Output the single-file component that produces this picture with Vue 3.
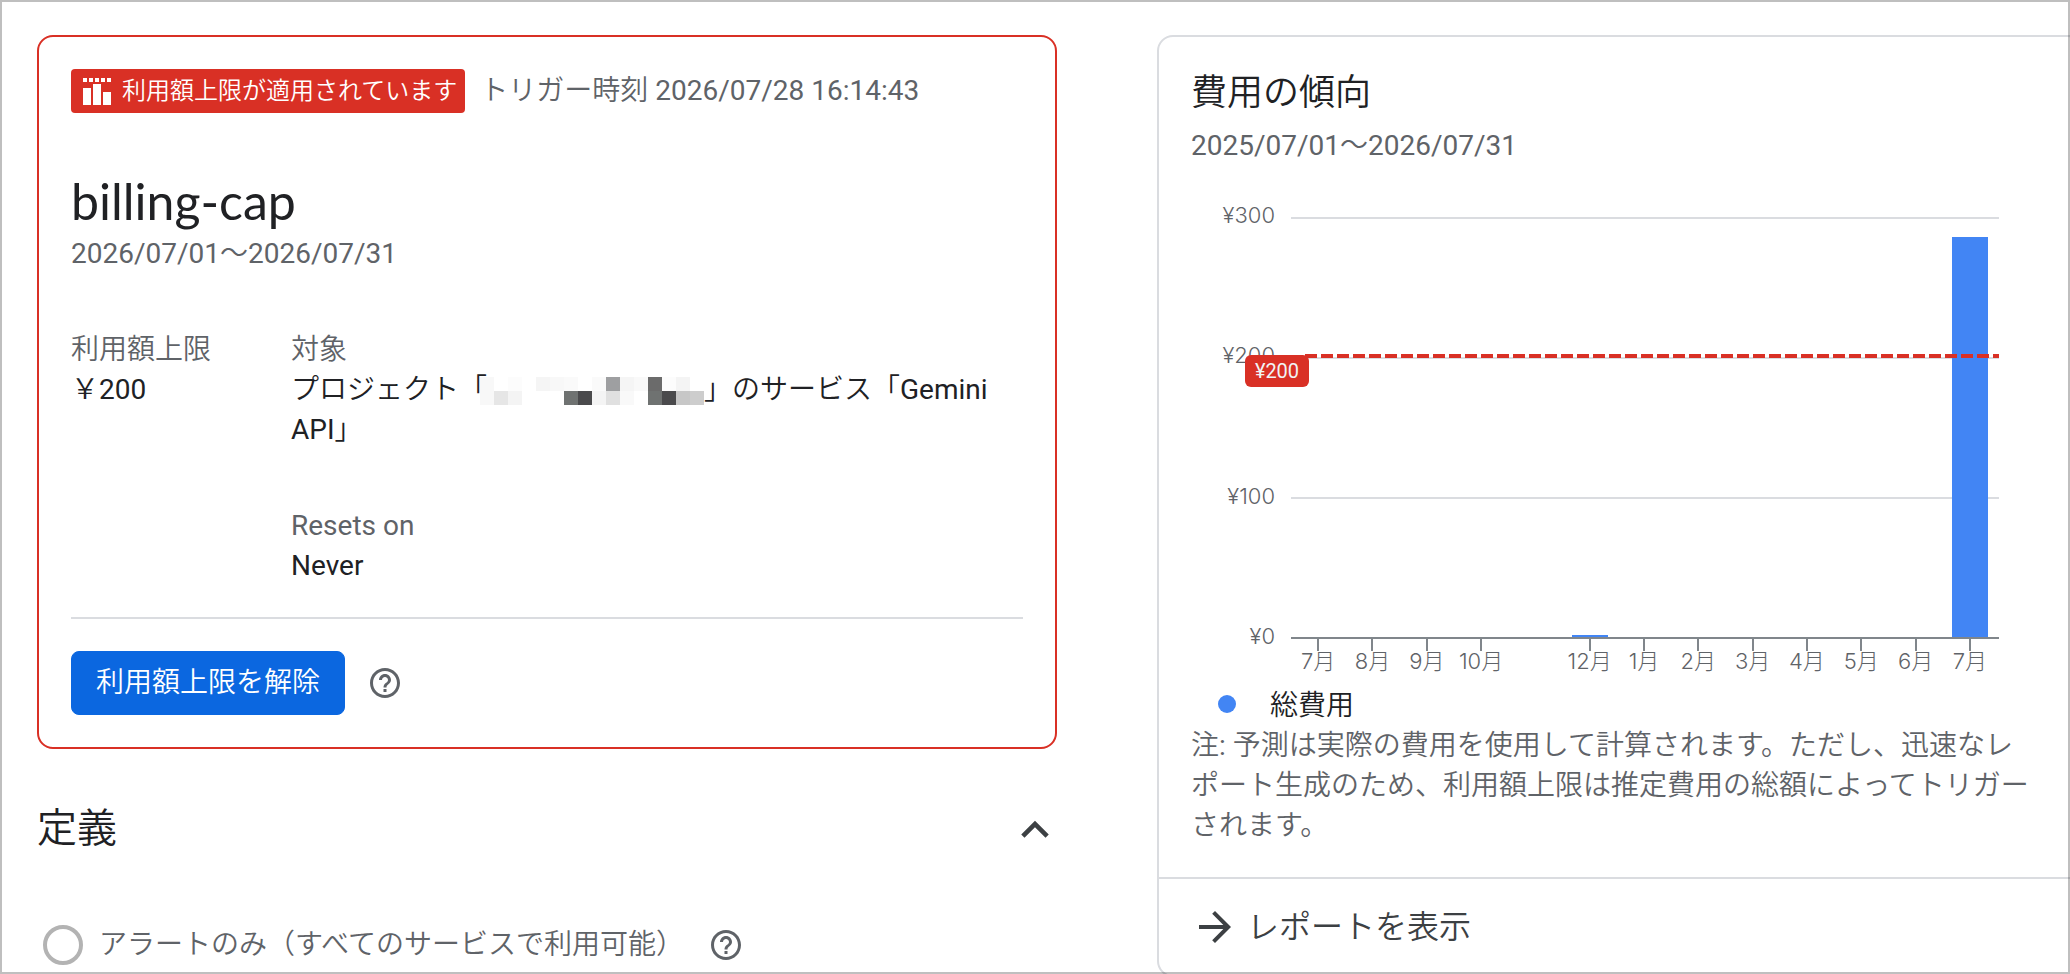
<template>
  <div class="page">
    <main class="page__main">
      <section class="cap-card">
        <div class="cap-card__status">
          <span class="chip">
            <svg class="chip__icon" viewBox="0 0 28 28" aria-hidden="true">
              <path d="M0 1h4v4H0zM6 1h4v4H6zM12 1h4v4h-4zM18 1h4v4h-4zM24 1h4v4h-4z" />
              <path d="M0 11h8v17H0zM10 7h8v21h-8zM20 15h8v13h-8z" />
            </svg>
            利用額上限が適用されています
          </span>
          <span class="muted">トリガー時刻 2026/07/28 16:14:43</span>
        </div>

        <h1 class="cap-card__title">billing-cap</h1>
        <p class="muted">2026/07/01～2026/07/31</p>

        <div class="cap-card__details">
          <dl class="detail">
            <dt>利用額上限</dt>
            <dd>￥200</dd>
          </dl>
          <div class="cap-card__column">
            <dl class="detail">
              <dt>対象</dt>
              <dd>
                プロジェクト「<svg class="mosaic" viewBox="0 0 16 2" preserveAspectRatio="none" aria-hidden="true">
                  <rect
                    v-for="(fill, i) in mosaic"
                    :key="i"
                    :x="i % 16"
                    :y="Math.floor(i / 16)"
                    width="1"
                    height="1"
                    :fill="fill"
                  />
                </svg>」のサービス「Gemini API」
              </dd>
            </dl>
            <dl class="detail">
              <dt>Resets on</dt>
              <dd>Never</dd>
            </dl>
          </div>
        </div>

        <div class="cap-card__actions">
          <button type="button" class="btn-primary">利用額上限を解除</button>
          <button type="button" class="btn-icon" aria-label="ヘルプ">
            <svg class="help" viewBox="0 0 24 24"><path :d="helpPath" /></svg>
          </button>
        </div>
      </section>

      <section class="definition">
        <div class="definition__header">
          <h2 id="definition-title">定義</h2>
          <button type="button" class="btn-icon" aria-labelledby="definition-title" aria-expanded="true">
            <svg class="chevron" viewBox="2.4 2 19.2 19.2">
              <path d="M12 8l-6 6 1.41 1.41L12 10.83l4.59 4.58L18 14z" />
            </svg>
          </button>
        </div>
        <div class="option">
          <input id="alert-only" class="option__radio" type="radio" name="mode" value="alert" />
          <label for="alert-only">アラートのみ（すべてのサービスで利用可能）</label>
          <button type="button" class="btn-icon option__help" aria-label="ヘルプ">
            <svg class="help" viewBox="0 0 24 24"><path :d="helpPath" /></svg>
          </button>
        </div>
      </section>
    </main>

    <aside class="trend">
      <div class="trend__body">
        <h2 class="trend__title">費用の傾向</h2>
        <p class="muted">2025/07/01～2026/07/31</p>

        <div class="chart">
          <div class="chart__y">
            <span v-for="v in yTicks" :key="v">¥{{ v }}</span>
          </div>
          <div class="chart__plot">
            <div class="chart__grid">
              <i v-for="v in yTicks" :key="v" />
            </div>
            <div class="chart__bars">
              <div v-for="(m, i) in months" :key="i" class="chart__slot">
                <div v-if="m.cost" class="chart__bar" :style="{ height: barHeight(m.cost) }" />
              </div>
            </div>
            <div class="chart__limit" :style="{ bottom: barHeight(limit) }" />
            <div class="chart__badge" :style="{ top: `calc(100% - ${barHeight(limit)})` }">¥{{ limit }}</div>
          </div>
          <div class="chart__x">
            <span v-for="(m, i) in months" :key="i" :class="{ tick: m.label }">{{ m.label }}</span>
          </div>
        </div>

        <div class="legend"><i class="legend__dot" />総費用</div>
        <p class="muted">
          注: 予測は実際の費用を使用して計算されます。ただし、迅速なレポート生成のため、利用額上限は推定費用の総額によってトリガーされます。
        </p>
      </div>

      <a class="trend__link" href="#report">
        <svg class="arrow" viewBox="0 0 24 24" aria-hidden="true">
          <path d="M12 4l-1.41 1.41L16.17 11H4v2h12.17l-5.58 5.59L12 20l8-8z" />
        </svg>
        レポートを表示
      </a>
    </aside>
  </div>
</template>

<script setup>
const limit = 200
const yMax = 300
const yTicks = [300, 200, 100, 0]

// 11月はラベルなし
const months = [
  { label: '7月', cost: 0 },
  { label: '8月', cost: 0 },
  { label: '9月', cost: 0 },
  { label: '10月', cost: 0 },
  { label: '', cost: 0 },
  { label: '12月', cost: 1.5 },
  { label: '1月', cost: 0 },
  { label: '2月', cost: 0 },
  { label: '3月', cost: 0 },
  { label: '4月', cost: 0 },
  { label: '5月', cost: 0 },
  { label: '6月', cost: 0 },
  { label: '7月', cost: 286 }
]

const barHeight = cost => `${(cost / yMax) * 100}%`

// プロジェクト名のモザイク（16列 x 2行）
const mosaic = [
  '#f8f8f8', '#fff', '#fcfcfc', '#fff', '#f5f5f5', '#f8f8f8', '#fafafa', '#fff',
  '#fafafa', '#9e9fa1', '#f5f5f5', '#f9f9f9', '#6b6b6b', '#fcfcfc', '#f4f4f4', '#fff',
  '#f8f8f8', '#e6e6e6', '#f4f4f4', '#fff', '#fff', '#fff', '#6f7271', '#4a4a4c',
  '#f4f4f4', '#e0e0e0', '#f9f9f9', '#fff', '#6f7271', '#4a4a4c', '#c7c7c7', '#cdcdcd'
]

const helpPath =
  'M11 18h2v-2h-2v2zm1-16C6.48 2 2 6.48 2 12s4.48 10 10 10 10-4.48 10-10S17.52 2 12 2zm0 18c-4.41 0-8-3.59-8-8s3.59-8 8-8 8 3.59 8 8-3.59 8-8 8zm0-14c-2.21 0-4 1.79-4 4h2c0-1.1.9-2 2-2s2 .9 2 2c0 2-3 1.75-3 5h2c0-2.25 3-2.5 3-5 0-2.21-1.79-4-4-4z'
</script>

<style>
body {
  margin: 0;
  background: #fff;
}
</style>

<style scoped>
.page {
  box-sizing: border-box;
  position: relative;
  display: grid;
  grid-template-columns: minmax(0, 1020fr) minmax(0, 913fr);
  align-items: start;
  gap: 100px;
  height: 100vh;
  padding: 35px 0 0 37px;
  overflow: hidden;
  color: #202124;
  font: 28px/40px Roboto, "Noto Sans CJK JP DemiLight", "Noto Sans CJK JP Light", "Noto Sans CJK JP", sans-serif;
}
.page::after {
  content: "";
  position: absolute;
  inset: 0;
  border: 2px solid rgba(0, 0, 0, .25);
  pointer-events: none;
}

h1, h2, p, dl, dd {
  margin: 0;
  font-weight: 400;
}
button {
  font: inherit;
  cursor: pointer;
}
svg {
  display: block;
  flex: none;
  fill: currentColor;
}

.muted {
  color: #5f6368;
}

/* 利用額上限カード */
.cap-card {
  padding: 32px;
  border: 2px solid #d93025;
  border-radius: 16px;
}
.cap-card__status {
  display: flex;
  align-items: center;
  gap: 15px;
}
.chip {
  display: flex;
  align-items: center;
  gap: 11px;
  height: 44px;
  padding: 0 8px 0 12px;
  border-radius: 4px;
  background: #d93025;
  color: #fff;
  font-size: 24px;
}
.chip__icon {
  width: 28px;
  height: 28px;
}
.cap-card__title {
  margin: 60px 0 5px;
  font-family: Lato, sans-serif;
  font-size: 50px;
  line-height: 56px;
}
.cap-card__details {
  display: grid;
  grid-template-columns: 220px 1fr;
  margin-top: 56px;
}
.cap-card__column {
  display: flex;
  flex-direction: column;
  gap: 56px;
}
.detail dt {
  color: #5f6368;
}
.mosaic {
  display: inline-block;
  width: 224px;
  height: 28px;
  margin-left: -7px;
  vertical-align: -6px;
  shape-rendering: crispEdges;
}
.cap-card__actions {
  display: flex;
  align-items: center;
  gap: 22px;
  margin-top: 31px;
  padding-top: 32px;
  border-top: 2px solid #dadce0;
}
.btn-primary {
  height: 64px;
  padding: 0 24px;
  border: 1px solid #0b67e0;
  border-radius: 8px;
  background: #0b67e0;
  color: #fff;
}
.btn-icon {
  padding: 0;
  border: 0;
  background: none;
  color: #5f6368;
}
.help {
  width: 36px;
  height: 36px;
}

/* 定義 */
.definition__header {
  display: flex;
  justify-content: space-between;
  align-items: center;
  margin-top: 56px;
}
.definition__header h2 {
  font-size: 40px;
  line-height: 48px;
}
.chevron {
  width: 44px;
  height: 44px;
  color: #3c4043;
}
.option {
  display: flex;
  align-items: center;
  gap: 16px;
  margin-top: 72px;
  padding-left: 6px;
  color: #5f6368;
}
.option__radio {
  appearance: none;
  width: 40px;
  height: 40px;
  margin: 0;
  border: 4px solid #b3b3b3;
  border-radius: 50%;
}
.option__help {
  margin-left: 8px;
}

/* 費用の傾向 */
.trend {
  margin-right: -14px;
  border: 2px solid #dadce0;
  border-radius: 16px;
}
.trend__body {
  padding: 32px 43px 31px 32px;
}
.trend__title {
  margin-bottom: 9px;
  font-size: 36px;
  line-height: 48px;
}
.chart {
  display: grid;
  grid-template-columns: 100px 1fr;
  grid-template-rows: 422px 47px;
  margin: 51px 40px 0 0;
  color: #5f6368;
  font: 300 22px/24px Inter, "Noto Sans CJK JP", sans-serif;
}
.chart__y {
  display: flex;
  flex-direction: column;
  justify-content: space-between;
  margin: -14px 0 -9px;
  padding-right: 16px;
  text-align: right;
}
.chart__plot {
  position: relative;
  display: grid;
}
.chart__grid,
.chart__bars {
  grid-area: 1 / 1;
}
.chart__grid {
  display: flex;
  flex-direction: column;
  justify-content: space-between;
}
.chart__grid i {
  height: 2px;
  background: #dadce0;
}
.chart__grid i:last-child {
  background: #80868b;
}
.chart__bars,
.chart__x {
  display: grid;
  grid-template-columns: repeat(13, 1fr);
  padding-right: 2px;
}
.chart__bars {
  margin-bottom: 2px;
}
.chart__slot {
  display: flex;
  align-items: flex-end;
  justify-content: center;
}
.chart__bar {
  width: 36px;
  background: #4285f4;
}
.chart__limit {
  position: absolute;
  left: 14px;
  right: 0;
  height: 4px;
  background: repeating-linear-gradient(90deg, #d93025 0 12px, transparent 12px 16px);
}
.chart__badge {
  position: absolute;
  left: -46px;
  width: 64px;
  margin-top: -3px;
  border-radius: 6px;
  background: #d93025;
  color: #f1f3f4;
  font: 20px/32px Roboto, sans-serif;
  text-align: center;
}
.chart__x {
  grid-column: 2;
  line-height: 20px;
}
.chart__x span {
  display: flex;
  flex-direction: column;
  align-items: center;
  white-space: nowrap;
}
.chart__x .tick::before {
  content: "";
  width: 2px;
  height: 12px;
  background: #80868b;
}
.legend {
  display: flex;
  align-items: center;
  gap: 34px;
  padding-left: 27px;
}
.legend__dot {
  width: 18px;
  height: 18px;
  margin-bottom: 4px;
  border-radius: 50%;
  background: #4285f4;
}
.trend__link {
  display: flex;
  align-items: center;
  gap: 8px;
  padding: 24px 32px;
  border-top: 2px solid #dadce0;
  color: #3c4043;
  font-size: 32px;
  line-height: 48px;
  text-decoration: none;
}
.arrow {
  width: 48px;
  height: 48px;
}
</style>
